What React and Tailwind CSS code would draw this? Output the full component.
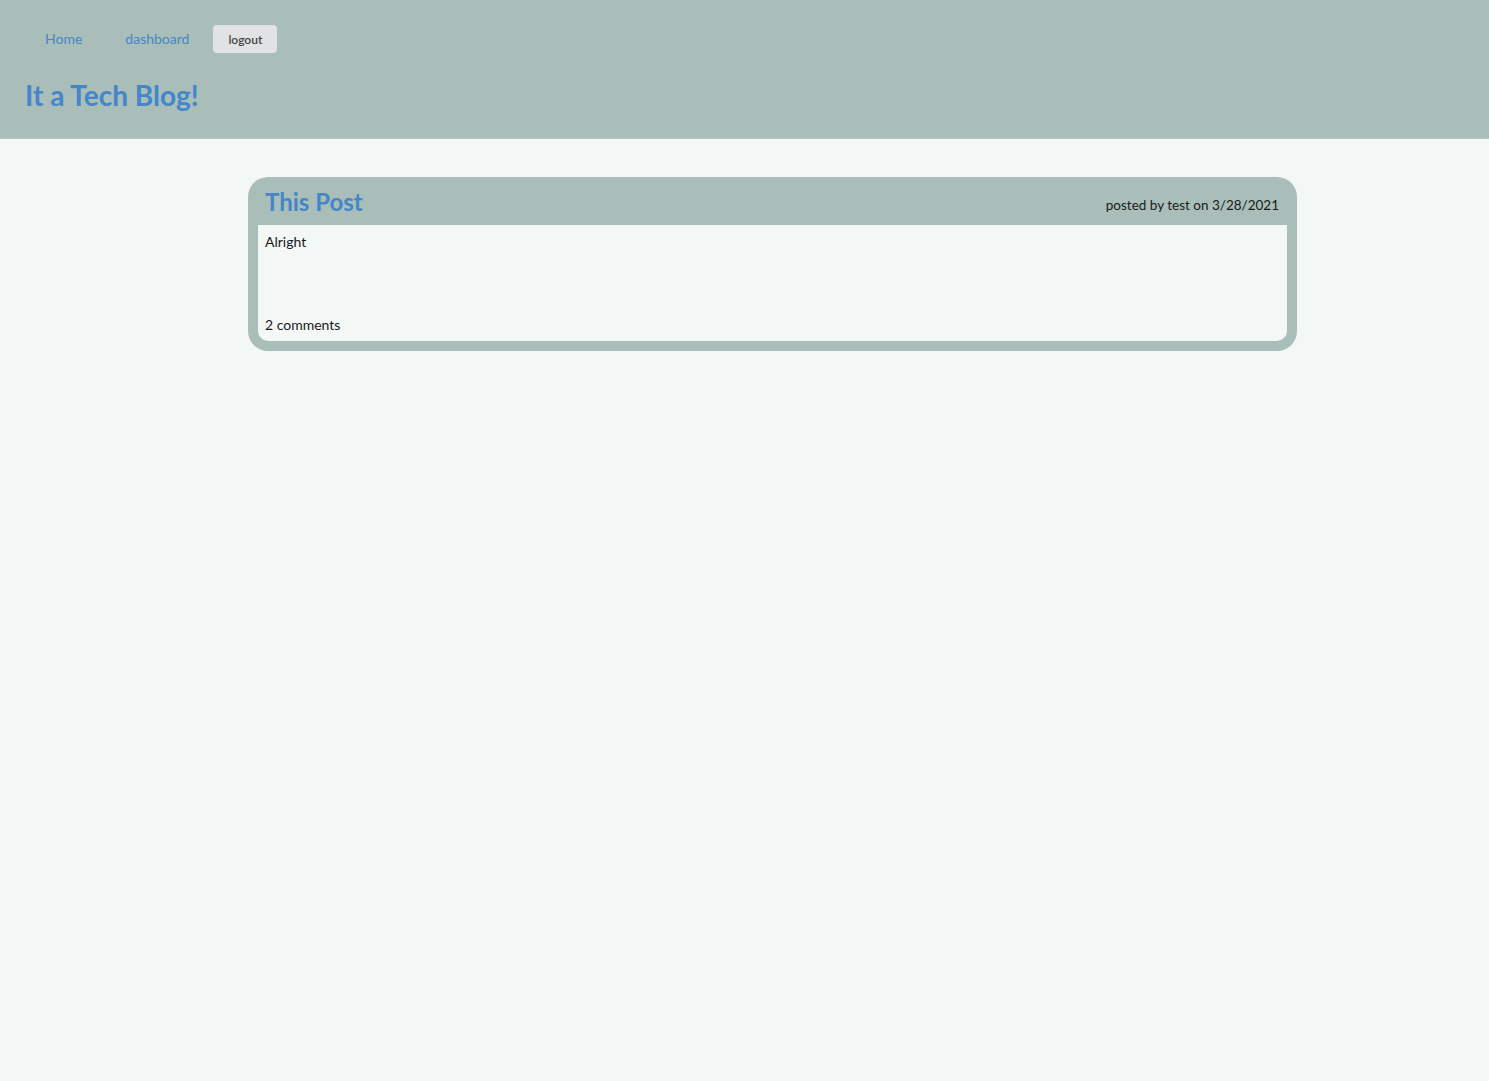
export default function App() {
  return (
    <div className="min-h-screen bg-[#f3f7f6] font-['Lato','Open_Sans',sans-serif] text-[#1a1a1a]">
      <header className="h-[139px] bg-[#a9beb8] border-b border-[#b9c6c2] px-[25px] pt-[25px]">
        <nav className="flex items-center h-[28px] text-[14px] leading-[18px]">
          <a className="ml-[20px] -mt-[1px] text-[#4486c9]">Home</a>
          <a className="ml-[43px] -mt-[1px] text-[#4486c9]">dashboard</a>
          <button className="ml-[24px] w-[64px] h-[28px] rounded-[4px] bg-[#e1e2e4] text-[12px] font-semibold text-[#444]">
            <span className="relative top-[1px]">logout</span>
          </button>
        </nav>
        <h1 className="mt-[25px] text-[28px] leading-[34px] font-bold text-[#4486c9]">It a Tech Blog!</h1>
      </header>

      <main className="pt-[38px]">
        <div className="ml-[248px] w-[1049px] bg-[#a9beb8] rounded-[20px] px-[10px] pb-[10px]">
          <div className="h-[48px] flex items-center justify-between pl-[7px] pr-[8px]">
            <h2 className="text-[24px] font-bold text-[#4486c9] leading-[30px] mt-[2px]">This Post</h2>
            <span className="text-[13.5px] mt-[8px]">posted by test on 3/28/2021</span>
          </div>
          <div className="h-[116px] bg-[#f3f7f6] rounded-b-[10px] flex flex-col justify-between px-[7px] pt-[7px] pb-[6px] text-[14px] leading-[20px]">
            <p>Alright</p>
            <p>2 comments</p>
          </div>
        </div>
      </main>
    </div>
  );
}
